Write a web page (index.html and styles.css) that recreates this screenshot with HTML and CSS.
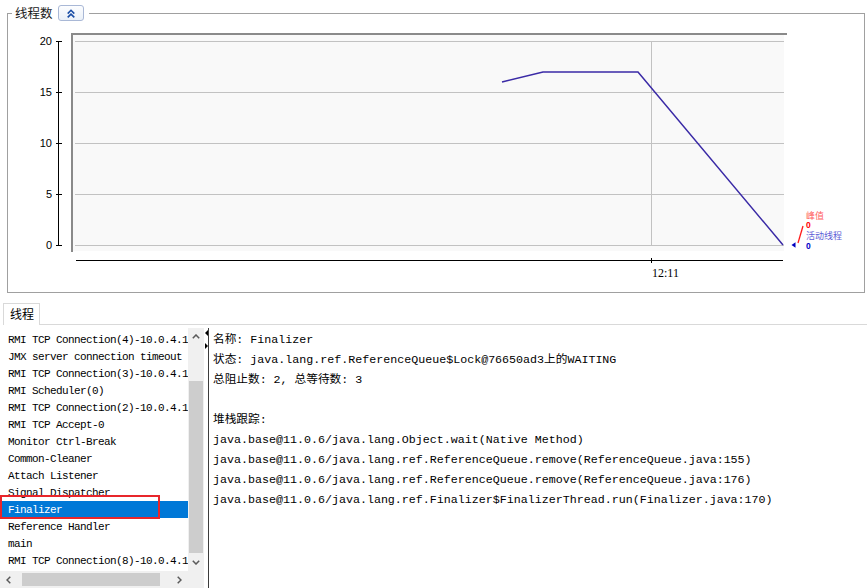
FILE: index.html
```html
<!DOCTYPE html>
<html lang="zh">
<head>
<meta charset="utf-8">
<title>线程</title>
<link rel="stylesheet" href="styles.css">
</head>
<body>
<fieldset class="threads-box">
  <legend class="box-legend"><span class="legend-text">线程数</span><button class="collapse-btn" type="button"><svg class="chev-icon" width="8" height="9" viewBox="0 0 8 9"><polyline points="0.7,4.6 4,1.3 7.3,4.6"/><polyline points="0.7,8.4 4,5.1 7.3,8.4"/></svg></button></legend>
  <svg class="chart" width="856" height="271" viewBox="8 21 856 271">
    <g class="ylabel">
      <text x="52" y="45">20</text>
      <text x="52" y="96">15</text>
      <text x="52" y="147">10</text>
      <text x="52" y="198">5</text>
      <text x="52" y="249">0</text>
    </g>
    <path class="axis" d="M58.5 41V246 M56 41.5H62 M56 92.5H62 M56 143.5H62 M56 194.5H62 M56 245.5H62"/>
    <rect class="plot-bg" x="73" y="35" width="711" height="216"/>
    <path class="plot-border" d="M71 34H787 M72 33V252"/>
    <path class="grid" d="M75 41.5H784 M75 92.5H784 M75 143.5H784 M75 194.5H784 M75 245.5H784 M651.5 41V246"/>
    <path class="axis" d="M76 260.5H783 M651.5 258V263"/>
    <text class="xlabel" x="652" y="277">12:11</text>
    <polyline class="series" points="502,82 543,72 638,72 783,245"/>
    <path class="peak-mark" d="M798 243L803 226"/>
    <polygon class="live-mark" points="791.5,245 795.5,242.3 795.5,247.7"/>
    <text class="leg-peak" x="806" y="218.5">峰值</text>
    <text class="leg-peak-val" x="806" y="228">0</text>
    <text class="leg-live" x="806" y="239">活动线程</text>
    <text class="leg-live-val" x="806" y="249">0</text>
  </svg>
</fieldset>

<section class="threads-tabs">
  <div class="tab-strip">
    <div class="tab">线程</div>
    <div class="tab-rest"></div>
  </div>
  <div class="split">
    <div class="list-pane">
      <div class="list-viewport">
        <div class="row">RMI TCP Connection(4)-10.0.4.1</div>
        <div class="row">JMX server connection timeout</div>
        <div class="row">RMI TCP Connection(3)-10.0.4.1</div>
        <div class="row">RMI Scheduler(0)</div>
        <div class="row">RMI TCP Connection(2)-10.0.4.1</div>
        <div class="row">RMI TCP Accept-0</div>
        <div class="row">Monitor Ctrl-Break</div>
        <div class="row">Common-Cleaner</div>
        <div class="row">Attach Listener</div>
        <div class="row">Signal Dispatcher</div>
        <div class="row selected">Finalizer<span class="highlight-box"></span></div>
        <div class="row">Reference Handler</div>
        <div class="row">main</div>
        <div class="row">RMI TCP Connection(8)-10.0.4.1</div>
      </div>
      <div class="vscroll">
        <div class="sb-btn"><svg class="sb-arrow" width="8" height="5" viewBox="0 0 8 5"><polyline points="0.8,4.3 4,1 7.2,4.3"/></svg></div>
        <div class="vtrack"><div class="vthumb"></div></div>
        <div class="sb-btn"><svg class="sb-arrow" width="8" height="5" viewBox="0 0 8 5"><polyline points="0.8,0.7 4,4 7.2,0.7"/></svg></div>
      </div>
      <div class="hscroll">
        <div class="sb-btn-h"><svg class="sb-arrow" width="5" height="8" viewBox="0 0 5 8"><polyline points="4.3,0.8 1,4 4.3,7.2"/></svg></div>
        <div class="htrack"><div class="hthumb"></div></div>
        <div class="sb-btn-h"><svg class="sb-arrow" width="5" height="8" viewBox="0 0 5 8"><polyline points="0.7,0.8 4,4 0.7,7.2"/></svg></div>
      </div>
      <div class="sb-corner"></div>
    </div>
    <div class="divider">
      <svg class="div-arrows" width="4" height="20" viewBox="0 0 4 20"><polygon points="1,4 4,1 4,7"/><polygon points="4,17 1,14 1,20"/></svg>
    </div>
    <div class="detail">
      <div class="line">名称: Finalizer</div>
      <div class="line">状态: java.lang.ref.ReferenceQueue$Lock@76650ad3上的WAITING</div>
      <div class="line">总阻止数: 2, 总等待数: 3</div>
      <div class="line"> </div>
      <div class="line">堆栈跟踪:</div>
      <div class="line">java.base@11.0.6/java.lang.Object.wait(Native Method)</div>
      <div class="line">java.base@11.0.6/java.lang.ref.ReferenceQueue.remove(ReferenceQueue.java:155)</div>
      <div class="line">java.base@11.0.6/java.lang.ref.ReferenceQueue.remove(ReferenceQueue.java:176)</div>
      <div class="line">java.base@11.0.6/java.lang.ref.Finalizer$FinalizerThread.run(Finalizer.java:170)</div>
    </div>
  </div>
</section>
</body>
</html>
```

FILE: styles.css
```css
* { box-sizing: border-box; }
html, body { margin: 0; padding: 0; background: #fff; }
body {
  width: 867px;
  height: 588px;
  overflow: hidden;
  font-family: "Noto Sans CJK SC", "Liberation Sans", sans-serif;
  color: #000;
}

/* ---- chart group box ---- */
.threads-box {
  margin: 5px 0 0 7px;
  width: 858px;
  padding: 0;
  border: 1px solid #a0a0a0;
  min-width: 0;
}
.box-legend {
  margin-left: 4px;
  padding: 0 5px 0 3px;
  height: 16px;
  line-height: 16px;
  white-space: nowrap;
}
.legend-text {
  display: inline-block;
  vertical-align: top;
  font-size: 12.5px;
  line-height: 16px;
  color: #1a1a1a;
}
.collapse-btn {
  display: inline-flex;
  vertical-align: top;
  align-items: center;
  justify-content: center;
  width: 26px;
  height: 16px;
  margin: 0 0 0 5px;
  padding: 0;
  border: 1px solid #a9b8d6;
  border-radius: 3px;
  background: linear-gradient(#fcfdff, #eaf0f8);
}
.chev-icon polyline {
  fill: none;
  stroke: #1b4ea6;
  stroke-width: 1.6;
}
.chart { display: block; }
.ylabel text {
  font-family: "Liberation Sans", sans-serif;
  font-size: 11px;
  text-anchor: end;
  fill: #000;
}
.axis { fill: none; stroke: #000; stroke-width: 1; }
.plot-bg { fill: #f9f9f9; }
.plot-border { fill: none; stroke: #8a8a8a; stroke-width: 2; }
.grid { fill: none; stroke: #c2c2c2; stroke-width: 1; }
.xlabel {
  font-family: "Liberation Serif", serif;
  font-size: 12px;
  fill: #000;
}
.series { fill: none; stroke: #3a2aa6; stroke-width: 1.5; }
.peak-mark { fill: none; stroke: #ff1a1a; stroke-width: 1.3; }
.live-mark { fill: #0000c0; }
.leg-peak, .leg-live {
  font-family: "Noto Sans CJK SC", sans-serif;
  font-size: 9px;
}
.leg-peak { fill: #ff6060; }
.leg-live { fill: #5c5cd6; }
.leg-peak-val, .leg-live-val {
  font-family: "Liberation Sans", sans-serif;
  font-size: 8.5px;
  font-weight: bold;
}
.leg-peak-val { fill: #ff0000; }
.leg-live-val { fill: #0000c8; }

/* ---- tabs ---- */
.threads-tabs { margin-top: 10px; }
.tab-strip { display: flex; height: 22px; }
.tab {
  margin-left: 3px;
  width: 37px;
  height: 22px;
  padding-left: 6px;
  border: 1px solid #d9d9d9;
  border-bottom: none;
  background: #fff;
  font-size: 12px;
  line-height: 20px;
  color: #000;
}
.tab-rest { flex: 1; border-bottom: 1px solid #d9d9d9; }

.split {
  display: flex;
  height: 263px;
  padding-top: 3px;
}

/* ---- thread list ---- */
.list-pane {
  width: 204px;
  height: 260px;
  display: grid;
  grid-template-columns: 188px 16px;
  grid-template-rows: 243px 17px;
}
.list-viewport {
  overflow: hidden;
  padding-top: 3px;
  background: #fff;
}
.row {
  position: relative;
  height: 17px;
  line-height: 16px;
  padding: 1px 0 0 8px;
  white-space: nowrap;
  font-family: "Liberation Mono", monospace;
  font-size: 11px;
  letter-spacing: -0.6px;
  color: #000;
}
.row.selected { background: #0078d7; color: #fff; }
.highlight-box {
  position: absolute;
  left: 0;
  top: -6px;
  width: 160px;
  height: 24px;
  border: 2px solid #e8262b;
}
.vscroll {
  display: flex;
  flex-direction: column;
  background: #f0f0f0;
}
.sb-btn {
  height: 17px;
  display: flex;
  align-items: center;
  justify-content: center;
}
.vtrack { flex: 1; padding-top: 36px; }
.vthumb { height: 172px; margin: 0 1px; background: #cdcdcd; }
.hscroll {
  display: flex;
  background: #f0f0f0;
}
.sb-btn-h {
  width: 17px;
  display: flex;
  align-items: center;
  justify-content: center;
}
.htrack { flex: 1; padding: 2px 0 0 5px; }
.hthumb { width: 138px; height: 13px; background: #cdcdcd; }
.sb-corner { background: #f0f0f0; }
.sb-arrow polyline { fill: none; stroke: #5a5a5a; stroke-width: 1.5; }

/* ---- divider ---- */
.divider { width: 4px; padding-top: 1px; }
.div-arrows { display: block; }
.div-arrows polygon { fill: #000; }

/* ---- detail ---- */
.detail {
  flex: 1;
  border-left: 1px solid #3c3c3c;
  padding: 2px 0 0 4px;
  font-family: "Liberation Mono", "Noto Sans CJK SC", monospace;
  font-size: 11.67px;
  line-height: 20px;
  color: #000;
}
.line { white-space: pre; height: 20px; }
```
